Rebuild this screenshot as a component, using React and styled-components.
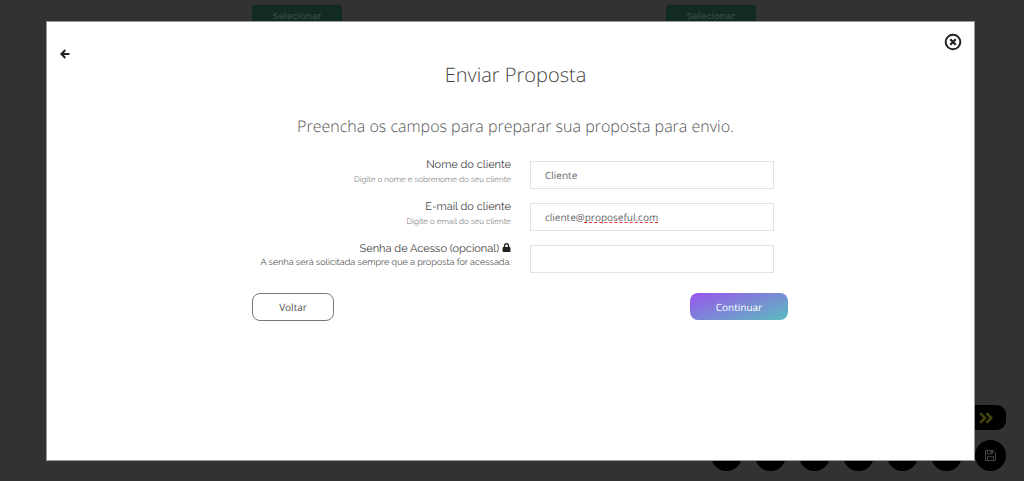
import React, { useState } from "react";
import styled, { createGlobalStyle } from "styled-components";
import { FaLock } from "react-icons/fa";

const GlobalStyle = createGlobalStyle`
  * {
    box-sizing: border-box;
  }
  body {
    margin: 0;
    background: #323232;
    color: #444;
    font-family: "Open Sans", "Noto Sans", sans-serif;
    text-rendering: geometricPrecision;
  }
`;

const Page = styled.main`
  min-height: 100vh;
  padding: 5px 0;
  overflow: hidden;
`;

const PlanList = styled.div`
  display: flex;
  justify-content: center;
  gap: 324px;
  margin-right: 16px;
`;

const PlanButton = styled.button`
  display: flex;
  justify-content: center;
  width: 90px;
  height: 27px;
  padding: 5px 0 0;
  border: none;
  border-radius: 4px;
  background: #112b22;
  color: #304a41;
  font-family: Montserrat, Inter, sans-serif;
  font-size: 9px;
  line-height: 12px;
  font-weight: 600;
`;

const Toolbar = styled.div`
  position: fixed;
  right: 18px;
  bottom: 10px;
  display: flex;
  flex-direction: column;
  align-items: flex-end;
  gap: 10px;
`;

const NextButton = styled.button`
  display: flex;
  align-items: center;
  justify-content: flex-end;
  width: 80px;
  height: 25px;
  padding: 0 13px 0 0;
  border: none;
  border-radius: 9px;
  background: #000;
  color: #45420c;
`;

const ToolRow = styled.div`
  display: flex;
  gap: 13px;
`;

const ToolButton = styled.button`
  display: flex;
  align-items: center;
  justify-content: center;
  width: 31px;
  height: 31px;
  padding: 0;
  border: none;
  border-radius: 50%;
  background: #000;
  color: #444;
`;

const Overlay = styled.div`
  position: fixed;
  inset: 0;
  display: flex;
  padding: 21px 49px 20px 46px;
`;

const Modal = styled.section`
  flex: 1;
  overflow: auto;
  border: 1px solid #999;
  background: #fff;
`;

const ModalHeader = styled.header`
  display: flex;
  justify-content: space-between;
  height: 37px;
  padding: 11px 12px 0 13px;
`;

const IconButton = styled.button`
  display: flex;
  align-self: ${(props) => props.$align};
  padding: 0;
  border: none;
  background: none;
  color: #222;
  cursor: pointer;
`;

const ModalBody = styled.div`
  display: flex;
  flex-direction: column;
  align-items: center;
  padding: 2px 0 20px 10px;
`;

const Title = styled.h1`
  margin: 0 0 26px;
  font-size: 20px;
  line-height: 28px;
  font-weight: 300;
`;

const Subtitle = styled.p`
  margin: 0 0 20px;
  color: #555;
  font-size: 16px;
  line-height: 22px;
  font-weight: 300;
`;

const Form = styled.form`
  width: 100%;
  max-width: 545px;
  padding-left: 9px;
`;

const Fields = styled.div`
  display: flex;
  flex-direction: column;
  gap: 10px;
  padding-right: 14px;
`;

const FieldRow = styled.div`
  display: grid;
  grid-template-columns: 1fr 244px;
  column-gap: 19px;
`;

const Label = styled.label`
  padding-top: 1px;
  color: #444;
  font-family: Raleway, Lato, sans-serif;
  font-size: 11px;
  line-height: 14px;
  text-align: right;
`;

const Hint = styled.small`
  display: block;
  color: ${(props) => (props.$strong ? "#555" : "#888")};
  font-size: ${(props) => (props.$strong ? "9px" : "8px")};
`;

const InputWrap = styled.div`
  position: relative;
  padding-top: 4px;
`;

const Input = styled.input`
  display: block;
  width: 100%;
  height: 28px;
  padding: 0 14px;
  border: 1px solid #e3e3e3;
  outline: none;
  background: #fff;
  color: #666;
  font-family: inherit;
  font-size: 10px;
  text-rendering: inherit;
`;

const SpellMark = styled.span`
  position: absolute;
  left: 54px;
  top: 23px;
  width: 74px;
  border-top: 1px dashed #f0323a;
`;

const Actions = styled.div`
  display: flex;
  justify-content: space-between;
  align-items: flex-start;
  margin-top: 20px;
`;

const Button = styled.button`
  width: ${(props) => (props.$primary ? "98px" : "82px")};
  height: ${(props) => (props.$primary ? "27px" : "28px")};
  padding: 0;
  border: ${(props) => (props.$primary ? "none" : "1px solid #777")};
  border-radius: 8px;
  background: ${(props) =>
    props.$primary ? "linear-gradient(160deg, #9a55ee, #5bbcbd)" : "#fff"};
  color: ${(props) => (props.$primary ? "#fff" : "#555")};
  font-family: inherit;
  font-size: 10px;
  text-rendering: inherit;
  cursor: pointer;
`;

const tools = ["Texto", "Imagem", "Tabela", "Editar", "Visualizar", "Enviar"];

function BackIcon() {
  return (
    <svg width="10" height="10" viewBox="0 0 10 10" fill="none" stroke="currentColor">
      <path d="M5.3 1L1.4 5l3.9 4M1.6 5H9.4" strokeWidth="2" />
    </svg>
  );
}

function CloseIcon() {
  return (
    <svg width="18" height="18" viewBox="0 0 18 18" fill="none" stroke="currentColor">
      <circle cx="9" cy="9" r="7.3" strokeWidth="2" />
      <path d="M6.3 6.3l5.4 5.4M11.7 6.3l-5.4 5.4" strokeWidth="2.3" />
    </svg>
  );
}

function DoubleArrowIcon() {
  return (
    <svg width="14" height="12" viewBox="0 0 14 12" fill="none" stroke="currentColor">
      <path d="M1.2 1.2L6 6l-4.8 4.8M7.4 1.2L12.2 6l-4.8 4.8" strokeWidth="2.6" />
    </svg>
  );
}

function SaveIcon() {
  return (
    <svg width="11" height="11" viewBox="0 0 11 11" fill="none" stroke="currentColor">
      <path d="M.5 .5h7.7l2.3 2.3v7.7H.5z" />
      <path d="M2.5 .8v3h5v-3M2.5 10.2V6.7h6v3.5" />
      <path d="M6 1v2.5" strokeWidth="1.6" />
    </svg>
  );
}

function App() {
  const [form, setForm] = useState({
    name: "Cliente",
    email: "cliente@proposeful.com",
    password: "",
  });

  function handleChange(e) {
    setForm({ ...form, [e.target.name]: e.target.value });
  }

  const submitHandler = (e) => {
    e.preventDefault();
  };

  return (
    <>
      <GlobalStyle />
      <Page>
        <PlanList>
          <PlanButton type="button">Selecionar</PlanButton>
          <PlanButton type="button">Selecionar</PlanButton>
        </PlanList>
        <Toolbar>
          <NextButton type="button" aria-label="Avançar">
            <DoubleArrowIcon />
          </NextButton>
          <ToolRow>
            {tools.map((e) => (
              <ToolButton key={e} type="button" aria-label={e} />
            ))}
            <ToolButton type="button" aria-label="Salvar">
              <SaveIcon />
            </ToolButton>
          </ToolRow>
        </Toolbar>
      </Page>
      <Overlay>
        <Modal role="dialog" aria-labelledby="modal-title">
          <ModalHeader>
            <IconButton type="button" aria-label="Voltar" $align="flex-end">
              <BackIcon />
            </IconButton>
            <IconButton type="button" aria-label="Fechar" $align="flex-start">
              <CloseIcon />
            </IconButton>
          </ModalHeader>
          <ModalBody>
            <Title id="modal-title">Enviar Proposta</Title>
            <Subtitle>Preencha os campos para preparar sua proposta para envio.</Subtitle>
            <Form onSubmit={submitHandler}>
              <Fields>
                <FieldRow>
                  <Label htmlFor="name">
                    Nome do cliente
                    <Hint>Digite o nome e sobrenome do seu cliente</Hint>
                  </Label>
                  <InputWrap>
                    <Input id="name" name="name" value={form.name} onChange={handleChange} />
                  </InputWrap>
                </FieldRow>
                <FieldRow>
                  <Label htmlFor="email">
                    E-mail do cliente
                    <Hint>Digite o email do seu cliente</Hint>
                  </Label>
                  <InputWrap>
                    <Input id="email" name="email" value={form.email} onChange={handleChange} />
                    {form.email === "cliente@proposeful.com" && <SpellMark />}
                  </InputWrap>
                </FieldRow>
                <FieldRow>
                  <Label htmlFor="password">
                    Senha de Acesso (opcional) <FaLock size={9} color="#222" />
                    <Hint $strong>
                      A senha será solicitada sempre que a proposta for acessada.
                    </Hint>
                  </Label>
                  <InputWrap>
                    <Input
                      id="password"
                      name="password"
                      type="password"
                      value={form.password}
                      onChange={handleChange}
                    />
                  </InputWrap>
                </FieldRow>
              </Fields>
              <Actions>
                <Button type="button">Voltar</Button>
                <Button type="submit" $primary>
                  Continuar
                </Button>
              </Actions>
            </Form>
          </ModalBody>
        </Modal>
      </Overlay>
    </>
  );
}

export default App;
